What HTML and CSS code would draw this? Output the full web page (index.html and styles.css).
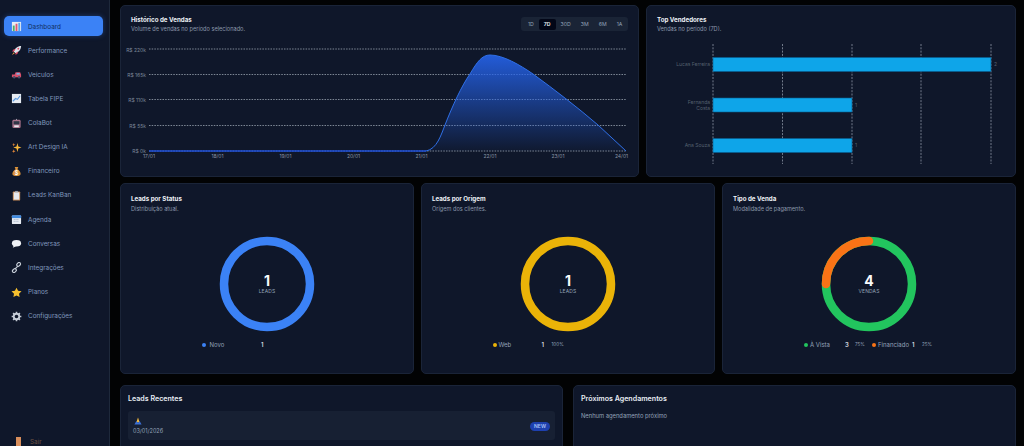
FILE: index.html
```html
<!DOCTYPE html>
<html lang="pt-BR">
<head>
<meta charset="utf-8">
<title>Dashboard</title>
<link rel="stylesheet" href="styles.css">
</head>
<body>
<div class="app">
  <aside class="sidebar">
    <nav class="nav">
      <a class="nav-item active"><svg class="ico" viewBox="0 0 12 12"><rect x="1" y="1" width="10" height="10" fill="#e8edf2"/><rect x="2" y="5" width="2" height="6" fill="#4caf6d"/><rect x="5" y="3" width="2" height="8" fill="#e0566f"/><rect x="8" y="2" width="2" height="9" fill="#5aa7e8"/></svg><span>Dashboard</span></a>
      <a class="nav-item"><svg class="ico" viewBox="0 0 12 12"><path d="M11 1 C7 1 4 4 3 7 L5 9 C8 8 11 5 11 1Z" fill="#dfe3ea"/><path d="M3 7 L1 7 L3 4.5 L5 4.5Z M5 9 L5 11 L7.5 9 L7.5 7Z" fill="#e0455f"/><circle cx="8" cy="4" r="1" fill="#e0455f"/><path d="M3 8 L1 11 L4 9Z" fill="#f59e42"/></svg><span>Performance</span></a>
      <a class="nav-item"><svg class="ico" viewBox="0 0 12 12"><path d="M1 6 L4 6 L5 3.5 L10 3.5 L11 6 L11 9 L1 9Z" fill="#d9506b"/><rect x="6" y="4.2" width="3.5" height="2" fill="#7fb2e5"/><circle cx="3.5" cy="9" r="1.3" fill="#46506a"/><circle cx="8.8" cy="9" r="1.3" fill="#46506a"/></svg><span>Veículos</span></a>
      <a class="nav-item"><svg class="ico" viewBox="0 0 12 12"><rect x="1" y="1" width="10" height="10" fill="#e6ebf2"/><path d="M2 9 L5 6 L7 7 L10 3" fill="none" stroke="#5b9be0" stroke-width="1.2"/></svg><span>Tabela FIPE</span></a>
      <a class="nav-item"><svg class="ico" viewBox="0 0 12 12"><rect x="1.5" y="2" width="9" height="9" rx="1.5" fill="#a8728a"/><rect x="2.8" y="3.5" width="6.4" height="3.5" fill="#2d3646"/><rect x="3.5" y="8" width="5" height="2" fill="#e6e9ee"/><rect x="5.5" y="1" width="1" height="1" fill="#b9c0cc"/></svg><span>ColaBot</span></a>
      <a class="nav-item"><svg class="ico" viewBox="0 0 12 12"><path d="M7 1 L8 5 L11.5 6 L8 7 L7 11 L6 7 L2.5 6 L6 5Z" fill="#f6b73c"/><path d="M3 1 L3.6 2.6 L5 3 L3.6 3.4 L3 5 L2.4 3.4 L1 3 L2.4 2.6Z M3 8 L3.5 9.5 L5 10 L3.5 10.5 L3 12 L2.5 10.5 L1 10 L2.5 9.5Z" fill="#ef8d3a"/></svg><span>Art Design IA</span></a>
      <a class="nav-item"><svg class="ico" viewBox="0 0 12 12"><path d="M4 1 H8 L7 3.5 C9.5 5 10.5 7 10.5 8.5 C10.5 10.5 8.5 11 6 11 C3.5 11 1.5 10.5 1.5 8.5 C1.5 7 2.5 5 5 3.5Z" fill="#d9913a"/><text x="6" y="9.4" class="ico-text">$</text></svg><span>Financeiro</span></a>
      <a class="nav-item"><svg class="ico" viewBox="0 0 12 12"><rect x="2" y="1.5" width="8" height="10" rx="1" fill="#c78a55"/><rect x="3" y="2.5" width="6" height="8" fill="#e6e9ee"/><rect x="4.5" y="1" width="3" height="1.5" fill="#9aa3b2"/></svg><span>Leads KanBan</span></a>
      <a class="nav-item"><svg class="ico" viewBox="0 0 12 12"><rect x="1" y="1.5" width="10" height="9.5" rx="1" fill="#e6ebf2"/><rect x="1" y="1.5" width="10" height="3" fill="#3f8ae0"/><path d="M3 6 H9 M3 8 H9" stroke="#9aa9bd" stroke-width="1" stroke-dasharray="1 1"/></svg><span>Agenda</span></a>
      <a class="nav-item"><svg class="ico" viewBox="0 0 12 12"><ellipse cx="6" cy="5.8" rx="5" ry="3.5" fill="#eef1f5"/><path d="M3 8 L2 10.5 L5.5 9Z" fill="#eef1f5"/></svg><span>Conversas</span></a>
      <a class="nav-item"><svg class="ico" viewBox="0 0 12 12"><g fill="none" stroke="#c5ccd6" stroke-width="1.3"><rect x="6" y="1" width="4.6" height="3.2" rx="1.6" transform="rotate(-45 8.3 2.6)"/><rect x="1.4" y="7.8" width="4.6" height="3.2" rx="1.6" transform="rotate(-45 3.7 9.4)"/><path d="M4.5 7.5 L7.5 4.5"/></g></svg><span>Integrações</span></a>
      <a class="nav-item"><svg class="ico" viewBox="0 0 12 12"><path d="M6 0.8 L7.7 4.2 L11.5 4.7 L8.7 7.3 L9.4 11 L6 9.2 L2.6 11 L3.3 7.3 L0.5 4.7 L4.3 4.2Z" fill="#f5bf2e"/></svg><span>Planos</span></a>
      <a class="nav-item"><svg class="ico" viewBox="0 0 12 12"><circle cx="6" cy="6" r="3" fill="none" stroke="#c5ccd6" stroke-width="2"/><g stroke="#c5ccd6" stroke-width="1.7"><path d="M6 .7V3M6 9v2.3M.7 6H3M9 6h2.3M2.3 2.3l1.6 1.6M8.1 8.1l1.6 1.6M2.3 9.7l1.6-1.6M8.1 3.9l1.6-1.6"/></g></svg><span>Configurações</span></a>
    </nav>
    <a class="logout"><i class="logout-bar"></i><span>Sair</span></a>
  </aside>

  <main class="main">
    <section class="row row-top">
      <article class="card">
        <div class="card-head">
          <div>
            <h2 class="title">Histórico de Vendas</h2>
            <p class="sub">Volume de vendas no período selecionado.</p>
          </div>
          <div class="tabs">
            <span class="tab">1D</span><span class="tab on">7D</span><span class="tab">30D</span><span class="tab">3M</span><span class="tab">6M</span><span class="tab">1A</span>
          </div>
        </div>
        <svg class="chart chart-sales" viewBox="125 40 505 125">
          <defs>
            <linearGradient id="area" x1="0" y1="0" x2="0" y2="1">
              <stop offset="0" stop-color="#2563eb" stop-opacity=".9"/>
              <stop offset="1" stop-color="#2563eb" stop-opacity=".03"/>
            </linearGradient>
          </defs>
          <g class="grid">
            <path d="M149 49H626M149 74.500H626M149 99.500H626M149 125.500H626M149 151H626"/>
          </g>
          <g class="axis-y">
            <text x="146" y="51.500">R$ 220k</text>
            <text x="146" y="77">R$ 165k</text>
            <text x="146" y="102">R$ 110k</text>
            <text x="146" y="127.500">R$ 55k</text>
            <text x="146" y="153">R$ 0k</text>
          </g>
          <path d="M426 151 C437 149 441 135 445 125 C452 107 462 85 470 74 C477 62 482 55 490 55 C503 55 520 65 533 74 C555 90 577 107 598 125 L626 151Z" fill="url(#area)"/>
          <path d="M149 151H426" class="line-flat"/>
          <path d="M426 151 C437 149 441 135 445 125 C452 107 462 85 470 74 C477 62 482 55 490 55 C503 55 520 65 533 74 C555 90 577 107 598 125 L626 151" class="line"/>
          <g class="axis-x">
            <text x="149" y="158">17/01</text>
            <text x="217.500" y="158">18/01</text>
            <text x="285.500" y="158">19/01</text>
            <text x="353.500" y="158">20/01</text>
            <text x="421.500" y="158">21/01</text>
            <text x="490" y="158">22/01</text>
            <text x="558" y="158">23/01</text>
            <text x="621.500" y="158">24/01</text>
          </g>
        </svg>
      </article>

      <article class="card">
        <h2 class="title">Top Vendedores</h2>
        <p class="sub">Vendas no período (7D).</p>
        <svg class="chart chart-top" viewBox="651 40 360 125">
          <path class="grid-v" d="M713 44V164M782.500 44V164M852 44V164M921 44V164M991 44V164"/>
          <rect class="bar" x="713" y="57.500" width="278" height="14"/>
          <rect class="bar" x="713" y="98" width="139" height="14"/>
          <rect class="bar" x="713" y="138.500" width="139" height="14"/>
          <g class="seller">
            <text x="710" y="66">Lucas Ferreira</text>
            <text x="710" y="103.500">Fernanda</text>
            <text x="710" y="110">Costa</text>
            <text x="710" y="147">Ana Souza</text>
          </g>
          <g class="count">
            <text x="994" y="66">2</text>
            <text x="855" y="107">1</text>
            <text x="855" y="147">1</text>
          </g>
        </svg>
      </article>
    </section>

    <section class="row row-mid">
      <article class="card">
        <h2 class="title">Leads por Status</h2>
        <p class="sub">Distribuição atual.</p>
        <svg class="donut" viewBox="0 0 96 96">
          <circle class="ring ring-blue" cx="48" cy="48" r="43"/>
          <text class="donut-num" x="48" y="50">1</text>
          <text class="donut-cap" x="48" y="57">LEADS</text>
        </svg>
        <div class="legend legend-status">
          <div class="item item-wide"><i class="dot dot-blue"></i><span class="lab lab-a">Novo</span><b class="val">1</b></div>
        </div>
      </article>

      <article class="card">
        <h2 class="title">Leads por Origem</h2>
        <p class="sub">Origem dos clientes.</p>
        <svg class="donut" viewBox="0 0 96 96">
          <circle class="ring ring-yellow" cx="48" cy="48" r="43"/>
          <text class="donut-num" x="48" y="50">1</text>
          <text class="donut-cap" x="48" y="57">LEADS</text>
        </svg>
        <div class="legend legend-origin">
          <div class="item"><i class="dot dot-yellow"></i><span class="lab lab-b">Web</span><b class="val">1</b><span class="pct">100%</span></div>
        </div>
      </article>

      <article class="card">
        <h2 class="title">Tipo de Venda</h2>
        <p class="sub">Modalidade de pagamento.</p>
        <svg class="donut" viewBox="0 0 96 96">
          <circle class="ring ring-green" cx="48" cy="48" r="43"/>
          <path class="ring ring-orange" d="M5 48 A43 43 0 0 1 48 5"/>
          <text class="donut-num" x="48" y="50">4</text>
          <text class="donut-cap" x="48" y="57">VENDAS</text>
        </svg>
        <div class="legend">
          <div class="item"><i class="dot dot-green"></i><span class="lab lab-c">À Vista</span><b class="val">3</b><span class="pct">75%</span></div>
          <div class="item"><i class="dot dot-orange"></i><span class="lab lab-d">Financiado</span><b class="val">1</b><span class="pct">25%</span></div>
        </div>
      </article>
    </section>

    <section class="row row-bottom">
      <article class="card card-list">
        <h2 class="list-title">Leads Recentes</h2>
        <div class="lead">
          <div class="lead-info">
            <svg class="pray" viewBox="0 0 10 10"><path d="M5 .5 L7 6.500 L5 7 L3 6.500Z" fill="#f5b93d"/><path d="M.5 9.500 L3 5 L5 7.500 L7 5 L9.500 9.500Z" fill="#3b6fd4"/></svg>
            <span class="lead-date">03/01/2026</span>
          </div>
          <span class="badge">NEW</span>
        </div>
      </article>
      <article class="card card-list">
        <h2 class="list-title">Próximos Agendamentos</h2>
        <p class="empty">Nenhum agendamento próximo</p>
      </article>
    </section>
  </main>
</div>
</body>
</html>
```

FILE: styles.css
```css
* { box-sizing: border-box; }
html, body { margin: 0; height: 100%; overflow: hidden; background: #020304; }
body { font-family: Inter, "Noto Sans", sans-serif; color: #f1f5f9; }
h2, p { margin: 0; }

.app { display: flex; height: 446px; overflow: hidden; }

.sidebar {
  width: 110px; flex: none; background: #0f172a; border-right: 1px solid #1e293b;
  display: flex; flex-direction: column; justify-content: space-between; padding: 16px 6px 0 4px;
}
.nav { display: flex; flex-direction: column; gap: 4.15px; }
.nav-item {
  display: flex; align-items: center; gap: 6px; height: 20px; padding: 1px 0 0 7px;
  border-radius: 5px; font-size: 6.4px; color: #8098bd;
}
.nav-item.active { background: #3b82f6; color: #12305f; box-shadow: 0 0 5px rgba(59,130,246,.35); }
.ico { width: 11px; height: 11px; flex: none; }
.ico-text { font-size: 6px; font-weight: 700; fill: #fff; text-anchor: middle; }
.logout { display: flex; align-items: flex-end; gap: 9px; padding-left: 12px; height: 9px; font-size: 6.4px; color: #6b5142; line-height: 7px; }
.logout-bar { display: block; width: 5px; height: 9px; background: #d98f5c; }

.main { flex: 1; min-width: 0; padding: 5px 8px 0 10px; display: flex; flex-direction: column; }
.row { display: grid; flex: none; }
.row-top { grid-template-columns: 519px 370px; gap: 7px; height: 172px; }
.row-mid { grid-template-columns: repeat(3, 294px); gap: 7px; height: 191px; margin-top: 6px; }
.row-bottom { grid-template-columns: 443px 443px; gap: 10px; height: 100px; margin-top: 11px; }
.row > .card { height: 100%; }

.card { background: #0f172a; border: 1px solid #1a2438; border-radius: 5px; padding: 9px 10px; min-width: 0; }
.row-mid > .card { padding-top: 10px; }
.row-mid .sub { margin-top: 2px; }
.card-head { display: flex; justify-content: space-between; align-items: flex-start; }
.title { font-size: 6.2px; line-height: 9px; font-weight: 700; color: #eef2f7; }
.sub { font-size: 5.6px; line-height: 9px; margin-top: 1px; color: #8c98aa; }

.tabs { display: flex; align-items: center; height: 14px; width: 107px; margin: 2px 0 0; padding: 0 1px 0 2px; background: #1a2436; border-radius: 3px; }
.tab { flex: auto; padding: 0 5px; font-size: 5.2px; line-height: 11px; height: 11px; color: #94a3b8; text-align: center; border-radius: 2px; }
.tab.on { background: #020617; color: #f1f5f9; font-weight: 600; }

.chart { display: block; }
.chart-sales { width: 505px; height: 125px; margin: 6px 0 0 -6px; }
.chart-top { width: 360px; height: 125px; margin: 6px 0 0 -6px; }

.grid path { stroke: #a3adba; stroke-width: 1; stroke-dasharray: 1.500 1.200; fill: none; opacity: .75; }
.axis-y text { font-size: 5px; fill: #7c8798; text-anchor: end; }
.axis-x text { font-size: 5px; fill: #8b95a5; text-anchor: middle; }
.line { fill: none; stroke: #2f6fe6; stroke-width: 1; }
.line-flat { fill: none; stroke: #1d4ed8; stroke-width: 1.300; }

.grid-v { stroke: #8a94a3; stroke-width: 1; stroke-dasharray: 2 1.300; fill: none; opacity: .8; }
.bar { fill: #0ea5e9; stroke: #075e91; stroke-width: .6; }
.seller text { font-size: 5px; fill: #55606f; text-anchor: end; }
.count text { font-size: 5px; fill: #55606f; }

.donut { display: block; width: 96px; height: 96px; margin: 22px auto 0; }
.ring { fill: none; stroke-width: 8.500; }
.ring-blue { stroke: #3b82f6; }
.ring-yellow { stroke: #eab308; }
.ring-green { stroke: #22c55e; }
.ring-orange { stroke: #f97316; stroke-linecap: round; }
.donut-num { font-size: 14px; font-weight: 700; fill: #f8fafc; text-anchor: middle; }
.donut-cap { font-size: 5px; fill: #94a3b8; text-anchor: middle; letter-spacing: .1px; }

.legend { display: flex; justify-content: center; gap: 5px; margin-top: 8px; }
.legend-status { padding-right: 61px; }
.legend-origin { padding-right: 80px; }
.item { display: flex; align-items: center; font-size: 6px; line-height: 9px; color: #94a3b8; }
.dot { width: 4px; height: 4px; border-radius: 50%; margin-right: 2px; flex: none; }
.dot-blue { background: #3b82f6; }
.dot-yellow { background: #eab308; }
.dot-green { background: #22c55e; }
.dot-orange { background: #f97316; }
.lab-a { width: 53px; padding-left: 1.500px; }
.lab-b { width: 43px; }
.lab-c { width: 35px; }
.lab-d { width: 34px; }
.val { color: #f1f5f9; font-weight: 500; width: 10px; }
.pct { font-size: 4.600px; color: #94a3b8; width: 12px; }

.card-list { padding: 8px 7px; }
.list-title { font-size: 7.100px; line-height: 10px; font-weight: 600; color: #e8edf4; }
.lead { display: flex; justify-content: space-between; align-items: center; height: 29px; margin-top: 7px; padding: 0 5px; background: #172033; border-radius: 3px; }
.lead-info { display: flex; flex-direction: column; gap: 2px; }
.pray { width: 8px; height: 8px; margin-left: 1px; display: block; }
.lead-date { font-size: 5.500px; line-height: 8px; color: #94a3b8; }
.badge { font-size: 5px; line-height: 9px; padding: 0 4px; font-weight: 600; color: #a8c4f5; background: #1e40af; border-radius: 5px; margin-top: 1px; }
.empty { font-size: 5.800px; line-height: 9px; color: #94a3b8; margin-top: 7px; }
```
